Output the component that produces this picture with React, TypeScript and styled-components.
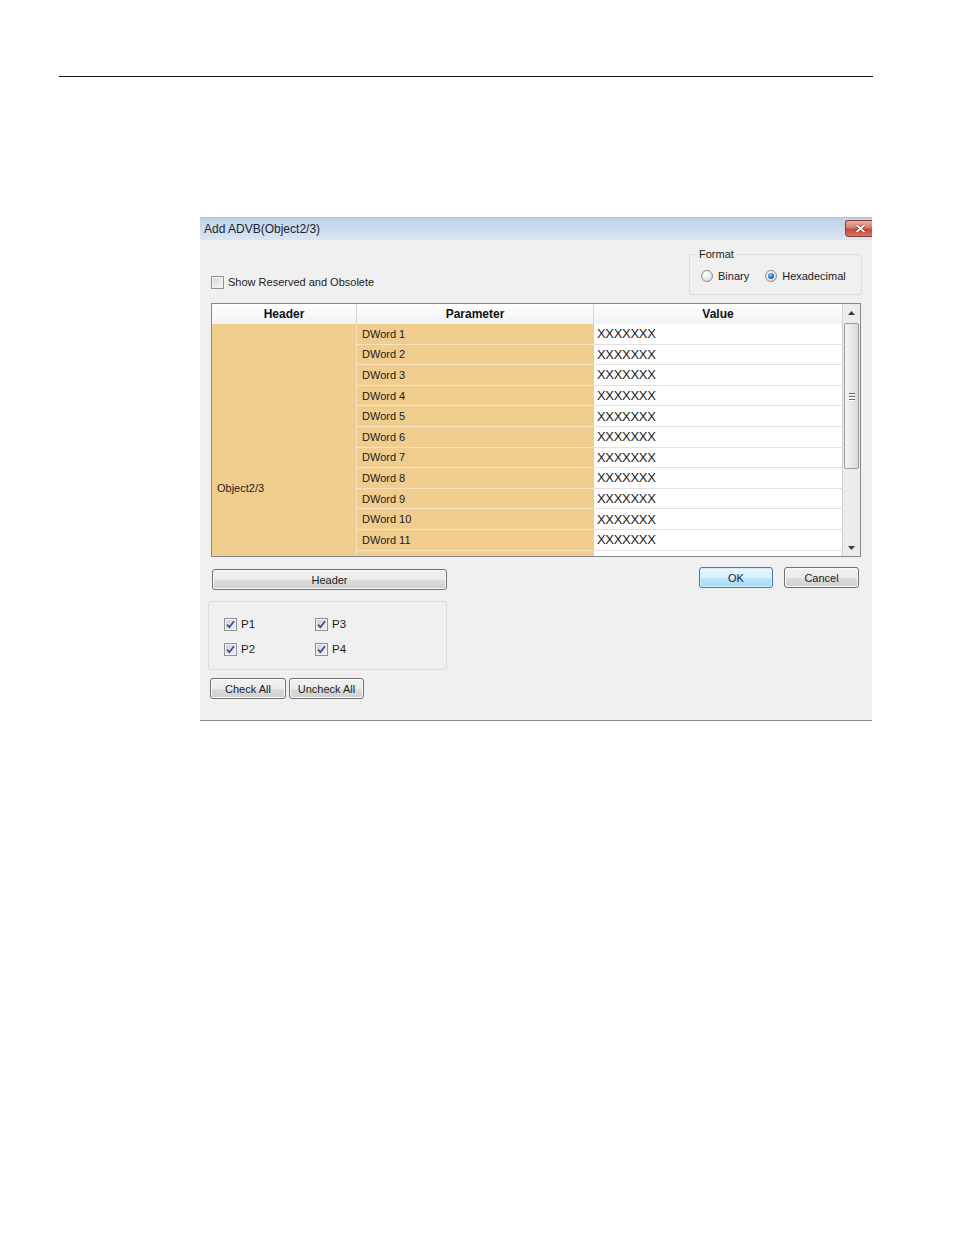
import React from 'react';
import styled, { createGlobalStyle, css } from 'styled-components';

const GlobalStyle = createGlobalStyle`
  html, body { margin: 0; padding: 0; background: #ffffff; }
  body {
    font-family: "Liberation Sans", Arial, sans-serif;
    font-size: 11px;
    color: #1b1b1b;
  }
  * { box-sizing: border-box; }
`;

const Page = styled.div`
  width: 954px;
  min-height: 1235px;
  padding-top: 76px;
`;

const Rule = styled.div`
  margin-left: 59px;
  width: 814px;
  height: 1px;
  background: #111;
`;

const Dialog = styled.div`
  margin: 140px 0 0 200px;
  width: 672px;
  background: #f0f0f0;
  border-bottom: 1px solid #8a8a8a;
`;

const TitleBar = styled.div`
  height: 23px;
  display: flex;
  justify-content: space-between;
  align-items: flex-start;
  padding-left: 4px;
  border-top: 1px solid #aebfd3;
  background: linear-gradient(#bcd2ea 0%, #cddcee 50%, #dbe6f3 100%);
`;

const Title = styled.div`
  font-size: 12px;
  line-height: 22px;
  color: #1c2330;
`;

const CloseButton = styled.div`
  width: 27px;
  height: 17px;
  margin-top: 2px;
  display: flex;
  align-items: center;
  justify-content: center;
  padding-left: 3px;
  border: 1px solid #8d3b33;
  border-right: none;
  border-radius: 3px 0 0 4px;
  background: linear-gradient(#e8b1a7 0%, #d77b6c 45%, #c6483a 55%, #d67563 100%);
`;

const Body = styled.div`
  padding: 7px 11px 21px 11px;
`;

const TopRow = styled.div`
  display: flex;
  justify-content: space-between;
  align-items: flex-end;
`;

const CheckRow = styled.label`
  display: flex;
  align-items: center;
  gap: 4px;
  margin-bottom: 6px;
  line-height: 14px;
`;

const Box = styled.span<{ $checked?: boolean }>`
  width: 13px;
  height: 13px;
  border: 1px solid #8e8f8f;
  display: inline-flex;
  align-items: center;
  justify-content: center;
  background: ${(p) =>
    p.$checked
      ? 'linear-gradient(135deg, #c9d1dd 0%, #eef1f6 100%)'
      : 'linear-gradient(135deg, #d6d6d6 0%, #f7f7f7 100%)'};
  box-shadow: inset 0 0 0 1px #f4f4f4;
`;

const GroupBox = styled.fieldset`
  margin: 0 -1px 0 0;
  width: 173px;
  padding: 0 0 11px 0;
  border: 1px solid #d5dfe5;
  border-radius: 3px;
`;

const Legend = styled.legend`
  margin-left: 7px;
  padding: 0 2px;
  font-size: 11px;
  line-height: 14px;
`;

const RadioRow = styled.div`
  display: flex;
  align-items: center;
  padding: 8px 0 0 11px;
  gap: 16px;
`;

const RadioItem = styled.label`
  display: flex;
  align-items: center;
  gap: 5px;
  line-height: 14px;
`;

const RadioCircle = styled.span<{ $checked?: boolean }>`
  width: 12px;
  height: 12px;
  border-radius: 50%;
  border: 1px solid #8e8f8f;
  background: radial-gradient(circle at 40% 35%, #ffffff 0%, #e6e6e6 60%, #cfcfcf 100%);
  display: inline-flex;
  align-items: center;
  justify-content: center;
  &::after {
    content: '';
    display: ${(p) => (p.$checked ? 'block' : 'none')};
    width: 6px;
    height: 6px;
    border-radius: 50%;
    background: radial-gradient(circle at 40% 35%, #9fd4f5 0%, #2a7bc0 45%, #0f3f78 100%);
  }
`;

const Grid = styled.div`
  margin-top: 8px;
  height: 254px;
  border: 1px solid #828790;
  display: flex;
  background: #ffffff;
`;

const TableArea = styled.div`
  flex: 1;
  display: flex;
  flex-direction: column;
  min-width: 0;
`;

const COLS = '145px 237px 249px';

const HeaderRow = styled.div`
  display: grid;
  grid-template-columns: ${COLS};
  height: 20px;
`;

const HeaderCell = styled.div`
  font-weight: bold;
  font-size: 12px;
  line-height: 21px;
  text-align: center;
  color: #111;
  border-right: 1px solid #d5d5d5;
  border-bottom: 1px solid #d5d5d5;
  background: linear-gradient(#ffffff 0%, #f7f8f9 50%, #f0f1f2 100%);
`;

const Viewport = styled.div`
  height: 232px;
  overflow: hidden;
  display: grid;
  grid-template-columns: ${COLS};
  grid-auto-rows: 20.6px;
  align-content: start;
`;

const MergedCell = styled.div`
  grid-column: 1;
  grid-row: 1 / span 16;
  background: #f0cc8f;
  border-right: 1px solid #f7e0b9;
  display: flex;
  align-items: center;
  padding-left: 5px;
  padding-bottom: 1px;
`;

const Cell = styled.div<{ $kind: 'param' | 'value' }>`
  display: flex;
  align-items: center;
  white-space: nowrap;
  overflow: hidden;
  ${(p) =>
    p.$kind === 'param'
      ? css`
          background: #f0cc8f;
          border-bottom: 1px solid #f7e2c0;
          padding-left: 5px;
        `
      : css`
          background: #ffffff;
          border-bottom: 1px solid #e2e2e2;
          border-right: 1px solid #cfcfcf;
          padding-left: 3px;
          font-size: 13px;
          letter-spacing: -0.3px;
          color: #222;
        `}
`;

const ScrollBar = styled.div`
  width: 17px;
  display: flex;
  flex-direction: column;
  background: #ececec;
`;

const ArrowBox = styled.div<{ $h: number }>`
  height: ${(p) => p.$h}px;
  display: flex;
  align-items: center;
  justify-content: center;
`;

const Track = styled.div`
  flex: 1;
  padding: 1px 1px 0 1px;
`;

const Thumb = styled.div`
  height: 146px;
  border: 1px solid #9a9a9a;
  border-radius: 2px;
  background: linear-gradient(90deg, #f4f4f4 0%, #e8e8e8 50%, #d8d8d8 100%);
  display: flex;
  flex-direction: column;
  align-items: center;
  justify-content: center;
  gap: 2px;
`;

const Grip = styled.span`
  width: 6px;
  height: 1px;
  background: #6a6a6a;
  box-shadow: 0 1px 0 #ffffff;
`;

const ButtonsRow = styled.div`
  margin-top: 10px;
  display: flex;
  justify-content: space-between;
  align-items: flex-start;
`;

const Button = styled.button<{ $w: number; $default?: boolean }>`
  width: ${(p) => p.$w}px;
  height: 21px;
  padding: 0;
  font-family: "Liberation Sans", Arial, sans-serif;
  font-size: 11px;
  color: #1b1b1b;
  border: 1px solid ${(p) => (p.$default ? '#3c7fb1' : '#707070')};
  border-radius: 3px;
  box-shadow: inset 0 0 0 1px ${(p) => (p.$default ? '#cfeeff' : '#fbfbfb')};
  background: ${(p) =>
    p.$default
      ? 'linear-gradient(#eaf6fd 0%, #d9f0fc 50%, #bee6fd 51%, #a7d9f5 100%)'
      : 'linear-gradient(#f2f2f2 0%, #ebebeb 50%, #dddddd 51%, #cfcfcf 100%)'};
`;

const HeaderButton = styled(Button)`
  margin: 2px 0 0 1px;
`;

const RightButtons = styled.div`
  display: flex;
  gap: 11px;
  margin-right: 2px;
`;

const CheckGroup = styled.div`
  margin: 11px 0 0 -3px;
  width: 239px;
  height: 69px;
  border: 1px solid #dcdcdc;
  border-radius: 3px;
  padding: 16px 0 0 15px;
  display: grid;
  grid-template-columns: 91px auto;
  grid-auto-rows: 13px;
  row-gap: 12px;
`;

const CheckItem = styled.label`
  display: flex;
  align-items: center;
  gap: 4px;
  line-height: 13px;
  font-size: 11.5px;
`;

const BottomButtons = styled.div`
  margin: 8px 0 0 -1px;
  display: flex;
  gap: 3px;
`;

const CheckMark = () => (
  <svg width="11" height="11" viewBox="0 0 11 11">
    <path d="M2 5.6 L4.4 8.2 L9 2.2" fill="none" stroke="#3a4f8c" strokeWidth="1.8" />
  </svg>
);

const CheckBox = ({ checked }: { checked?: boolean }) => (
  <Box $checked={checked}>{checked ? <CheckMark /> : null}</Box>
);

const Arrow = ({ up }: { up?: boolean }) => (
  <svg width="7" height="4" viewBox="0 0 7 4">
    <path d={up ? 'M0 4 L3.5 0 L7 4 Z' : 'M0 0 L3.5 4 L7 0 Z'} fill="#3d3d3d" />
  </svg>
);

const rows = Array.from({ length: 16 }, (_, i) => `DWord ${i + 1}`);

export default function App() {
  return (
    <Page>
      <GlobalStyle />
      <Rule />
      <Dialog>
        <TitleBar>
          <Title>Add ADVB(Object2/3)</Title>
          <CloseButton>
            <svg width="11" height="9" viewBox="0 0 11 9">
              <path d="M1.5 1 L9.5 8 M9.5 1 L1.5 8" stroke="#7a2a22" strokeWidth="3.2" />
              <path d="M1.5 1 L9.5 8 M9.5 1 L1.5 8" stroke="#ffffff" strokeWidth="1.8" />
            </svg>
          </CloseButton>
        </TitleBar>
        <Body>
          <TopRow>
            <CheckRow>
              <CheckBox />
              Show Reserved and Obsolete
            </CheckRow>
            <GroupBox>
              <Legend>Format</Legend>
              <RadioRow>
                <RadioItem>
                  <RadioCircle />
                  Binary
                </RadioItem>
                <RadioItem>
                  <RadioCircle $checked />
                  Hexadecimal
                </RadioItem>
              </RadioRow>
            </GroupBox>
          </TopRow>

          <Grid>
            <TableArea>
              <HeaderRow>
                <HeaderCell>Header</HeaderCell>
                <HeaderCell>Parameter</HeaderCell>
                <HeaderCell>Value</HeaderCell>
              </HeaderRow>
              <Viewport>
                <MergedCell>Object2/3</MergedCell>
                {rows.map((r) => (
                  <React.Fragment key={r}>
                    <Cell $kind="param">{r}</Cell>
                    <Cell $kind="value">XXXXXXX</Cell>
                  </React.Fragment>
                ))}
              </Viewport>
            </TableArea>
            <ScrollBar>
              <ArrowBox $h={18}>
                <Arrow up />
              </ArrowBox>
              <Track>
                <Thumb>
                  <Grip />
                  <Grip />
                  <Grip />
                </Thumb>
              </Track>
              <ArrowBox $h={17}>
                <Arrow />
              </ArrowBox>
            </ScrollBar>
          </Grid>

          <ButtonsRow>
            <HeaderButton $w={235}>Header</HeaderButton>
            <RightButtons>
              <Button $w={74} $default>
                OK
              </Button>
              <Button $w={75}>Cancel</Button>
            </RightButtons>
          </ButtonsRow>

          <CheckGroup>
            <CheckItem>
              <CheckBox checked />
              P1
            </CheckItem>
            <CheckItem>
              <CheckBox checked />
              P3
            </CheckItem>
            <CheckItem>
              <CheckBox checked />
              P2
            </CheckItem>
            <CheckItem>
              <CheckBox checked />
              P4
            </CheckItem>
          </CheckGroup>

          <BottomButtons>
            <Button $w={76}>Check All</Button>
            <Button $w={75}>Uncheck All</Button>
          </BottomButtons>
        </Body>
      </Dialog>
    </Page>
  );
}
